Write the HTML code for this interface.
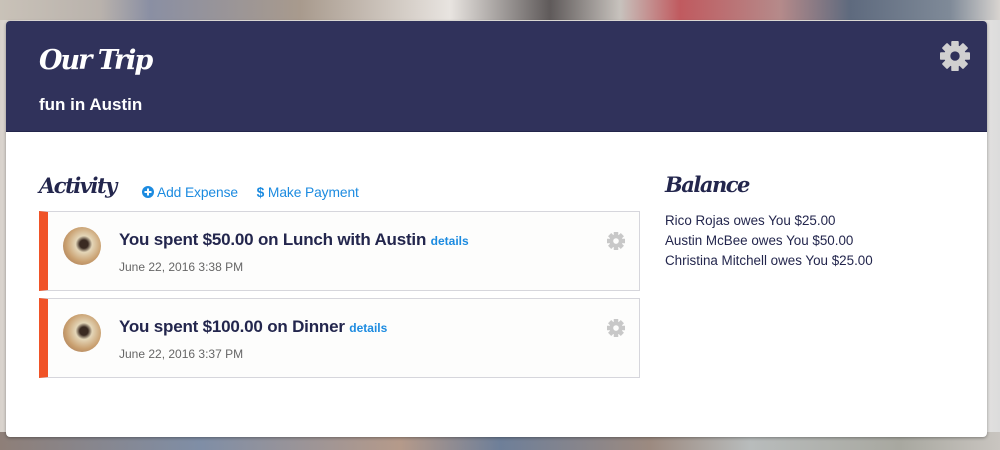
<!DOCTYPE html>
<html><head><style>
*{margin:0;padding:0;box-sizing:border-box}
body{width:1000px;height:450px;overflow:hidden;position:relative;font-family:"Liberation Sans",Arial,sans-serif;
background:linear-gradient(90deg,#c9c2b8 0%,#b9b2ac 10%,#8a8fa3 15%,#a89a8d 30%,#e8e4e0 45%,#5f5a5a 55%,#c7c2bd 62%,#c05a5f 68%,#b58a8a 78%,#5e6a7e 85%,#7f8a98 95%,#d8d4d0 100%);}
.bg2{position:absolute;left:0;top:20px;width:1000px;height:430px;background:linear-gradient(90deg,#d8d2cc 0%,#e6e3e0 3%,#e9e6e2 97%,#dcdcdc 100%)}
.bg3{position:absolute;left:0;top:432px;width:1000px;height:18px;background:linear-gradient(90deg,#8e7f78,#7f8ea6 20%,#b59a8a 40%,#6e7f99 50%,#9c8a80 65%,#b8bcbc 75%,#a8a8a0 90%,#c9c5c0)}
.card{position:absolute;left:6px;top:21px;width:981px;height:416px;background:#fff;border-radius:4px;overflow:hidden;box-shadow:0 1px 3px rgba(0,0,0,.35)}
.hdr{height:111px;background:#30325b;position:relative;border-bottom:1px solid #23254a}
.title{position:absolute;left:33px;top:24px;color:#fff;font-family:"DejaVu Serif",serif;font-style:italic;font-weight:bold;font-size:27px;letter-spacing:-2px}
.sub{position:absolute;left:33px;top:74px;color:#fff;font-size:17px;font-weight:bold}
.gear{position:absolute}
.act{position:absolute;left:33px;top:152px;color:#23264d;font-family:"DejaVu Serif",serif;font-style:italic;font-weight:bold;font-size:21px;letter-spacing:-1.5px}
.links{position:absolute;left:136px;top:164px;color:#1c8be0;font-size:13.8px;letter-spacing:-0.1px;white-space:nowrap}
.item{position:absolute;left:33px;width:601px;height:80px;background:#fdfdfc;border:1px solid #d6d6dc;border-left:9px solid #f05327}
.av{position:absolute;left:15px;top:15px;width:38px;height:38px;border-radius:50%;background:radial-gradient(circle at 55% 45%,#3a2a22 0 14%,#e4d6b8 28%,#c9a070 60%,#9a6a4a 100%)}
.it{position:absolute;left:71px;top:18px;color:#23264d;font-size:17px;font-weight:bold;letter-spacing:-0.2px}
.it span{color:#1c8be0;font-size:12px;letter-spacing:0}
.dt{position:absolute;left:71px;top:48px;color:#666;font-size:12px}
.bal{position:absolute;left:659px;top:151px;color:#23264d;font-family:"DejaVu Serif",serif;font-style:italic;font-weight:bold;font-size:21px;letter-spacing:-1.5px}
.bl{position:absolute;left:659px;top:190px;color:#23264d;font-size:13.4px;line-height:20px}
</style></head><body>
<div class="bg2"></div><div class="bg3"></div>
<div class="card">
 <div class="hdr">
  <div class="title">Our Trip</div>
  <div class="sub">fun in Austin</div>
  <svg class="gear" style="left:934px;top:20px" width="30" height="30" viewBox="0 0 32 32"><g fill="#d0d0d0" transform="translate(16,16)"><rect x="-4" y="-16" width="8" height="32" rx="1"/><rect x="-4" y="-16" width="8" height="32" rx="1" transform="rotate(45)"/><rect x="-4" y="-16" width="8" height="32" rx="1" transform="rotate(90)"/><rect x="-4" y="-16" width="8" height="32" rx="1" transform="rotate(135)"/><circle r="11.5"/></g><circle cx="16" cy="16" r="5" fill="#30325b"/></svg>
 </div>
 <div class="act">Activity</div>
 <div class="links"><svg width="12" height="12" viewBox="0 0 12 12" style="vertical-align:-1px"><circle cx="6" cy="6" r="6" fill="#1c8be0"/><rect x="2.5" y="5" width="7" height="2" fill="#fff"/><rect x="5" y="2.5" width="2" height="7" fill="#fff"/></svg> Add Expense &nbsp;&nbsp;&nbsp; <b>$</b> Make Payment</div>
 <div class="item" style="top:190px"><div class="av"></div><div class="it">You spent $50.00 on Lunch with Austin <span>details</span></div><div class="dt">June 22, 2016 3:38 PM</div>
  <svg class="gear" style="left:559px;top:20px" width="18" height="18" viewBox="0 0 32 32"><g fill="#c8c8c8" transform="translate(16,16)"><rect x="-4" y="-16" width="8" height="32"/><rect x="-4" y="-16" width="8" height="32" transform="rotate(45)"/><rect x="-4" y="-16" width="8" height="32" transform="rotate(90)"/><rect x="-4" y="-16" width="8" height="32" transform="rotate(135)"/><circle r="11.5"/></g><circle cx="16" cy="16" r="5" fill="#fdfdfc"/></svg></div>
 <div class="item" style="top:277px"><div class="av"></div><div class="it">You spent $100.00 on Dinner <span>details</span></div><div class="dt">June 22, 2016 3:37 PM</div>
  <svg class="gear" style="left:559px;top:20px" width="18" height="18" viewBox="0 0 32 32"><g fill="#c8c8c8" transform="translate(16,16)"><rect x="-4" y="-16" width="8" height="32"/><rect x="-4" y="-16" width="8" height="32" transform="rotate(45)"/><rect x="-4" y="-16" width="8" height="32" transform="rotate(90)"/><rect x="-4" y="-16" width="8" height="32" transform="rotate(135)"/><circle r="11.5"/></g><circle cx="16" cy="16" r="5" fill="#fdfdfc"/></svg></div>
 <div class="bal">Balance</div>
 <div class="bl">Rico Rojas owes You $25.00<br>Austin McBee owes You $50.00<br>Christina Mitchell owes You $25.00</div>
</div>
</body></html>
